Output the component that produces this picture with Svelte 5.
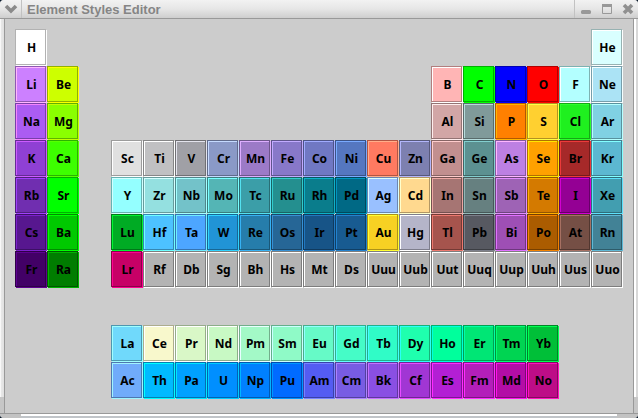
<script>
  const rows = [
    '0 H ffffff|18 He d9ffff',
    '0 Li cc80ff|1 Be cdff00|13 B ffb5b5|14 C 00ff00|15 N 0000ff|16 O ff0000|17 F b3ffff|18 Ne abe3f5',
    '0 Na ab5cf2|1 Mg 8aff00|13 Al d2a6a6|14 Si 809a9a|15 P ff8000|16 S ffd030|17 Cl 1ff01f|18 Ar 80d1e3',
    '0 K 8f40d4|1 Ca 3dff00|3 Sc e0e0e0|4 Ti c0c0c2|5 V a0a0a6|6 Cr 8a99c7|7 Mn 9c7ac7|8 Fe 8878c9|9 Co 7078c3|10 Ni 5577c0|11 Cu ff7a61|12 Zn 7d80b0|13 Ga c28f8f|14 Ge 5c9191|15 As bd80e3|16 Se ffa100|17 Br a62929|18 Kr 5cb8d1',
    '0 Rb 702eb0|1 Sr 00ff00|3 Y 94ffff|4 Zr 94e0e0|5 Nb 73c2c9|6 Mo 54b5b5|7 Tc 3b9ea8|8 Ru 248f8f|9 Rh 0a7d8c|10 Pd 006985|11 Ag 99c0ff|12 Cd ffd98f|13 In a67573|14 Sn 668080|15 Sb 9e63b5|16 Te d47a00|17 I 940094|18 Xe 429eb0',
    '0 Cs 57178f|1 Ba 00c900|3 Lu 00ab24|4 Hf 4dc2ff|5 Ta 4da6ff|6 W 2194d6|7 Re 267dab|8 Os 266696|9 Ir 175487|10 Pt 185b91|11 Au f7d123|12 Hg b5b5c9|13 Tl a6544d|14 Pb 575961|15 Bi 9e4fb5|16 Po ab5c00|17 At 754f45|18 Rn 428296',
    '0 Fr 420066|1 Ra 007d00|3 Lr c70066|4 Rf b3b3b3|5 Db b3b3b3|6 Sg b3b3b3|7 Bh b3b3b3|8 Hs b3b3b3|9 Mt b3b3b3|10 Ds b3b3b3|11 Uuu b3b3b3|12 Uub b3b3b3|13 Uut b3b3b3|14 Uuq b3b3b3|15 Uup b3b3b3|16 Uuh b3b3b3|17 Uus b3b3b3|18 Uuo b3b3b3',
    '',
    '3 La 70d9fb|4 Ce f8f8cc|5 Pr d9f7c7|6 Nd c8f9c4|7 Pm a3f9c7|8 Sm 8ffac7|9 Eu 66fac7|10 Gd 45fcc7|11 Tb 30fcc7|12 Dy 1fffae|13 Ho 00ff9c|14 Er 00e675|15 Tm 00d452|16 Yb 00bf38',
    '3 Ac 70abfa|4 Th 00baff|5 Pa 00a1ff|6 U 008fff|7 Np 0080ff|8 Pu 006bff|9 Am 545cf2|10 Cm 785ce3|11 Bk 8a4fe3|12 Cf a136d4|13 Es b31fd4|14 Fm b31fba|15 Md b30da6|16 No bd0d87'
  ];

  const channels = (hex) => [0, 2, 4].map((i) => parseInt(hex.slice(i, i + 2), 16));
  const darker = (hex) => `rgb(${channels(hex).map((c) => Math.floor(c * 0.7)).join(',')})`;
  const brighter = (hex) => `rgb(${channels(hex).map((c) => Math.min(255, Math.floor(c / 0.7))).join(',')})`;

  const elements = rows.flatMap((row, r) =>
    row.split('|').filter(Boolean).map((entry) => {
      const [column, symbol, color] = entry.split(' ');
      return { row: r + 1, column: Number(column) + 1, symbol, color };
    })
  );
</script>

<div class="window">
  <header>
    <button class="menu" aria-label="Window menu">
      <svg width="14" height="12" viewBox="0 0 14 12"><path d="M2 3l5 5 5-5" fill="none" stroke="#8a8a8a" stroke-width="3.6" /></svg>
    </button>
    <h1>Element Styles Editor</h1>
    <div class="controls">
      <button aria-label="Minimize">
        <svg width="12" height="12" viewBox="0 0 12 12"><rect x="1" y="7" width="10" height="4" rx="1.5" fill="#999" /></svg>
      </button>
      <button aria-label="Maximize">
        <svg width="12" height="12" viewBox="0 0 12 12"><path d="M1.5 1.5h9v9h-9z" fill="none" stroke="#999" /><path d="M1 1h10v3H1z" fill="#999" /></svg>
      </button>
      <button aria-label="Close">
        <svg width="12" height="12" viewBox="0 0 12 12"><path d="M2 2l8 8M10 2l-8 8" stroke="#909090" stroke-width="3.6" /></svg>
      </button>
    </div>
  </header>
  <div class="body">
    <div class="edge left"></div>
    <main>
      {#each elements as el}
        <button
          class="element"
          style="grid-row:{el.row};grid-column:{el.column};--fill:#{el.color};--dark:{darker(el.color)};--light:{brighter(el.color)}"
        >{el.symbol}</button>
      {/each}
    </main>
    <div class="edge right"></div>
  </div>
  <footer><span></span><i></i><span></span></footer>
</div>

<style>
  :global(body) {
    background: #0a1a2c;
  }
  .window {
    box-sizing: border-box;
    min-height: 100vh;
    display: flex;
    flex-direction: column;
    overflow: hidden;
    border-radius: 4px;
    background: #cccccc;
    font-family: "Noto Sans", "Open Sans", sans-serif;
  }
  button {
    padding: 0;
    border: 0;
    background: none;
  }
  header {
    display: flex;
    align-items: stretch;
    height: 18px;
    border-bottom: 1px solid #999;
    background: linear-gradient(#f2f2f2, #e6e6e6 50%, #cecece);
  }
  header button {
    display: flex;
    align-items: center;
    justify-content: center;
  }
  .menu {
    width: 22px;
    border-right: 1px solid #c2c2c2;
  }
  h1 {
    flex: 1;
    margin: 0;
    padding-left: 5px;
    font: bold 13px/20px "Liberation Sans", Arial, sans-serif;
    color: #858585;
  }
  .controls {
    display: flex;
    border-left: 1px solid #c2c2c2;
  }
  .controls button {
    width: 21px;
  }
  .body {
    flex: 1;
    display: flex;
  }
  .edge {
    width: 4px;
    background: linear-gradient(to top, #c6c6c6 16px, transparent 16px), linear-gradient(to right, #f8f8f8 1px, #e8e8e8 1px, #e0e0e0);
  }
  .left {
    border-right: 1px solid #999;
  }
  .right {
    border-left: 1px solid #999;
    background: linear-gradient(to top, #c6c6c6 16px, transparent 16px), linear-gradient(to right, #fff 2px, #d8d8d8 2px);
  }
  main {
    flex: 1;
    display: grid;
    grid-template-columns: repeat(19, 1fr);
    grid-template-rows: repeat(10, 37px);
    padding: 10px 10px 14px;
  }
  .element {
    min-width: 0;
    margin: 0 1px 1px 0;
    padding: 2px 0 0 2px;
    border: 1px solid var(--dark);
    background: var(--fill);
    box-shadow: inset 1px 1px var(--light), 1px 1px var(--light);
    font: bold 12px/16px "Noto Sans", "Open Sans", sans-serif;
    color: #000;
    text-align: center;
    white-space: nowrap;
  }
  footer {
    display: flex;
    height: 4px;
    border-top: 1px solid #999;
  }
  footer span {
    width: 21px;
    background: #c2c2c2;
  }
  footer i {
    flex: 1;
    background: linear-gradient(#fff 2px, #c0c4c8 2px);
  }
</style>
